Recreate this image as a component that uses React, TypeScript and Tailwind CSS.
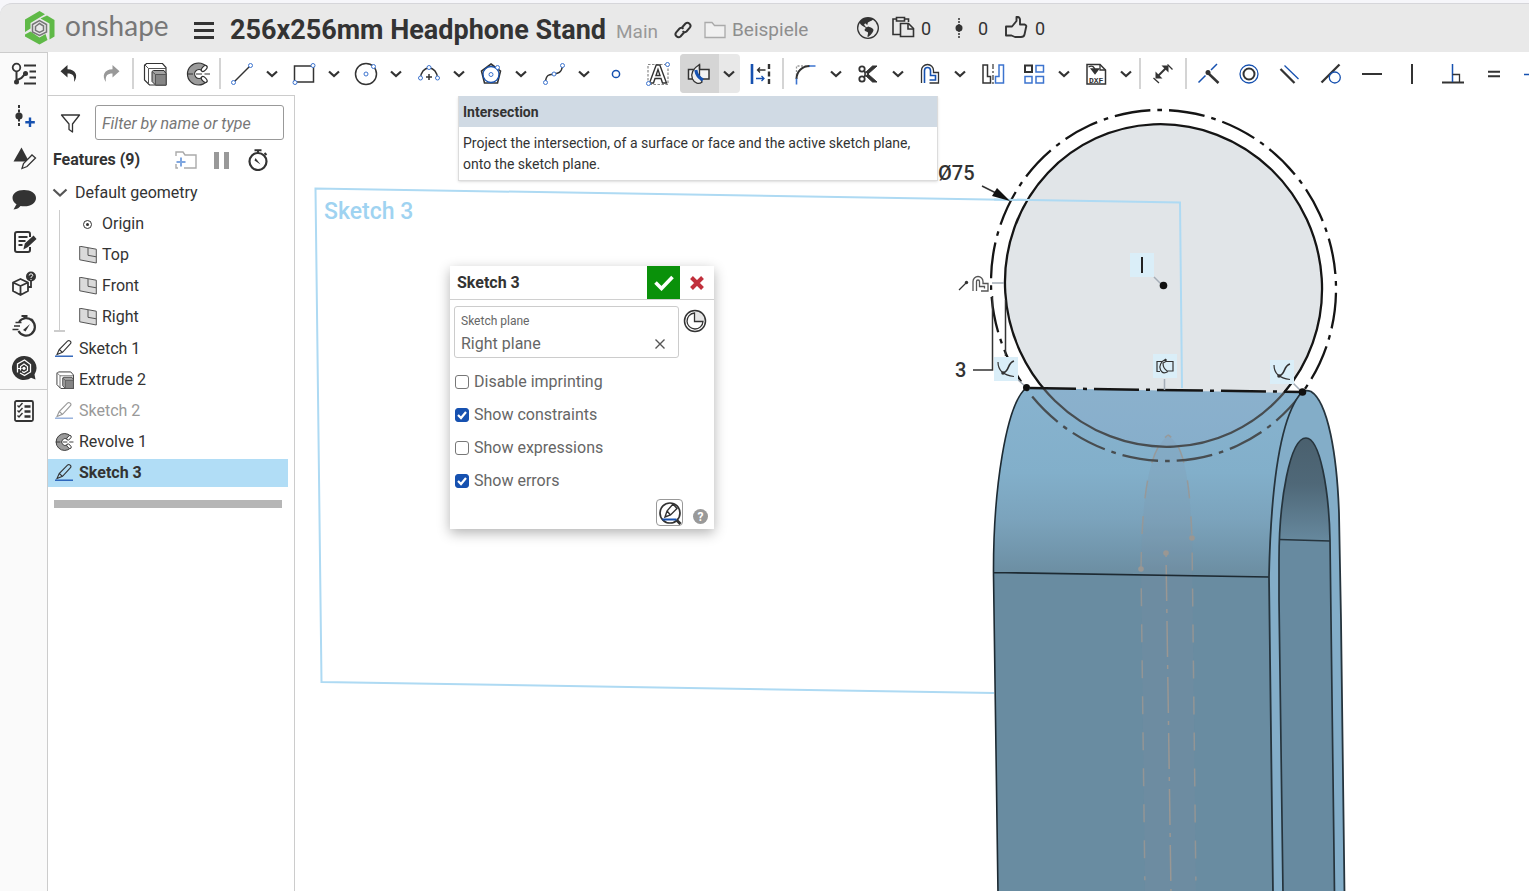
import React from "react";
import { BsGlobeAmericas } from "react-icons/bs";

const INK = "#333333";
const BLUE = "#1651b0";

type IconProps = { children: React.ReactNode; className?: string; box?: number };

function Icon({ children, className = "size-[26px]", box = 26 }: IconProps) {
  return (
    <svg
      viewBox={`0 0 ${box} ${box}`}
      className={`shrink-0 ${className}`}
      fill="none"
      stroke={INK}
      strokeWidth="1.5"
      aria-hidden="true"
    >
      {children}
    </svg>
  );
}

function Handle({ x, y, r = 2 }: { x: number; y: number; r?: number }) {
  return <circle cx={x} cy={y} r={r} fill="#fff" stroke="#3d74cf" strokeWidth="1" />;
}

/* ---------- shared feature icons ---------- */

function ExtrudeIcon({ className }: { className?: string }) {
  return (
    <Icon className={className}>
      <path d="M2.500 4.500 4.500 2.500H20.500L24 6.500V24H7.500L2.500 19z" fill="#fff" strokeWidth="1.200" />
      <path d="M2.500 3.500 6.500 7.500V23.500M6.500 7.500H24" stroke="#555" strokeWidth="1" />
      <path d="M10 10.500 11.500 9.500H22L24 12.500V24H13.500L10 20.500z" fill="#a2a2a2" strokeWidth="1" />
      <path d="M13.500 13.500H24V24H13.500z" fill="#858585" stroke="#555" strokeWidth="1" />
      <path d="M10 10.500 13.500 13.500" stroke="#555" strokeWidth="1" />
    </Icon>
  );
}

function RevolveIcon({ className }: { className?: string }) {
  return (
    <Icon className={className}>
      <path
        d="M20.500 5.500A11 11 0 1 0 20.500 20.500L16 16.500A4.500 4.500 0 1 1 16 9.500Z"
        fill="#9b9b9b"
        strokeWidth="1.200"
      />
      <ellipse cx="18.200" cy="7.500" rx="2" ry="3.600" transform="rotate(45 18.200 7.500)" fill="#fff" strokeWidth="1.200" />
      <ellipse cx="18.200" cy="18.500" rx="2" ry="3.600" transform="rotate(-45 18.200 18.500)" fill="#fff" strokeWidth="1.200" />
      <path d="M1 13h6M10 13h6M18.500 13h5.500" strokeWidth="1.200" />
    </Icon>
  );
}

function PencilIcon({ className }: { className?: string }) {
  return (
    <Icon className={className} box={18}>
      <path d="M2 14.500 4.200 9.500 12.700.9q1.200-.8 2.500.3t.3 2.500L7.500 12.300zM4.200 9.500l3.300 2.800M2 14.500l5.500-2.200" strokeWidth="1.100" />
      <path d="M0 16.200h18" stroke={BLUE} strokeWidth="1.300" />
    </Icon>
  );
}

function PlaneIcon() {
  return (
    <Icon className="size-[18px]" box={18}>
      <path d="M.7.200 17.300 3.200v13.800L.7 13.800z" fill="#dadada" stroke="#555" strokeWidth="1" />
      <path d="M9 2v7.300l8.300 1.500" stroke="#555" strokeWidth="1" />
    </Icon>
  );
}

function OffsetShape({ inner = BLUE }: { inner?: string }) {
  return (
    <>
      <path d="M4.500 22V9.500a6 6 0 0 1 12 0v2h5v10.500h-9" strokeWidth="1.300" />
      <path d="M7.500 22V9.500a3 3 0 0 1 6 0v5h5v4.500h-6" stroke={inner} strokeWidth="1.600" />
    </>
  );
}

/* ---------- toolbar ---------- */

function Chevron() {
  return (
    <svg viewBox="0 0 12 8" className="h-2 w-3" fill="none" stroke={INK} strokeWidth="2.200" aria-hidden="true">
      <path d="M1 1.500 6 6l5-4.500" />
    </svg>
  );
}

type Tool = { name: string; icon: React.ReactNode; menu?: boolean; active?: boolean };

function ToolButton({ tool }: { tool: Tool }) {
  return (
    <div className={`flex h-[39px] shrink-0 overflow-hidden rounded ${tool.active ? "bg-[#e8e8e8]" : ""}`}>
      <button
        aria-label={tool.name}
        className={`grid w-[39px] place-items-center ${tool.active ? "bg-[#d5d5d5]" : ""}`}
      >
        {tool.icon}
      </button>
      {tool.menu && (
        <button aria-label={`${tool.name} options`} className="grid w-[21px] place-items-center">
          <Chevron />
        </button>
      )}
    </div>
  );
}

function ToolGroup({ tools, className }: { tools: Tool[]; className: string }) {
  return (
    <div className={`flex shrink-0 items-center justify-between ${className}`}>
      {tools.map((tool) => (
        <ToolButton key={tool.name} tool={tool} />
      ))}
    </div>
  );
}

function Divider() {
  return <div className="h-[31px] w-[2px] shrink-0 bg-[#d4d4d4]" />;
}

const historyTools: Tool[] = [
  {
    name: "Undo",
    icon: (
      <Icon>
        <path d="M11.500 4 4.500 10.300l7 6.300v-4.200c5 0 7.500 2 6.500 8.600C22.500 15 20 8.200 11.500 8.200z" fill={INK} stroke="none" />
      </Icon>
    ),
  },
  {
    name: "Redo",
    icon: (
      <Icon>
        <path d="M14.500 4 21.500 10.300l-7 6.300v-4.200c-5 0-7.500 2-6.500 8.600C3.500 15 6 8.200 14.500 8.200z" fill="#999" stroke="none" />
      </Icon>
    ),
  },
];

const solidTools: Tool[] = [
  { name: "Extrude", icon: <ExtrudeIcon className="size-[26px]" /> },
  { name: "Revolve", icon: <RevolveIcon className="size-[26px]" /> },
];

const sketchTools: Tool[] = [
  {
    name: "Line",
    menu: true,
    icon: (
      <Icon>
        <path d="M4.500 21.500 21.500 4.500" />
        <Handle x={4.500} y={21.500} />
        <Handle x={21.500} y={4.500} />
      </Icon>
    ),
  },
  {
    name: "Rectangle",
    menu: true,
    icon: (
      <Icon>
        <path d="M3.500 5h19v16h-19z" />
        <Handle x={22} y={4.500} />
        <Handle x={4} y={21.500} />
      </Icon>
    ),
  },
  {
    name: "Circle",
    menu: true,
    icon: (
      <Icon>
        <circle cx="13" cy="13" r="10.500" />
        <circle cx="13" cy="13" r="2" stroke="#3d74cf" strokeWidth="1" />
        <Handle x={20.500} y={5.500} />
      </Icon>
    ),
  },
  {
    name: "Arc",
    menu: true,
    icon: (
      <Icon>
        <path d="M4.500 17.500a8.500 10.500 0 0 1 17 0" />
        <path d="M13 13v6M10 16h6" strokeWidth="1.500" />
        <Handle x={4.500} y={17} />
        <Handle x={21.500} y={17} />
        <Handle x={13} y={6.500} />
      </Icon>
    ),
  },
  {
    name: "Polygon",
    menu: true,
    icon: (
      <Icon>
        <path d="M13 3 22.500 10 19.500 22H6.500L3.500 10z" strokeWidth="1.600" />
        <circle cx="13" cy="13.500" r="8" stroke={BLUE} strokeWidth="1.300" />
        <circle cx="13" cy="13.500" r="2" stroke="#3d74cf" strokeWidth="1" />
        <Handle x={19.500} y={6.500} />
      </Icon>
    ),
  },
  {
    name: "Spline",
    menu: true,
    icon: (
      <Icon>
        <path d="M4.500 21C5 13 9 13.500 13 13s7.500-1 8.500-8" />
        <Handle x={4.500} y={21.500} />
        <Handle x={13} y={13} />
        <Handle x={21.500} y={4.500} />
      </Icon>
    ),
  },
  {
    name: "Point",
    icon: (
      <Icon>
        <circle cx="13" cy="13" r="3.600" stroke={BLUE} />
      </Icon>
    ),
  },
  {
    name: "Text",
    icon: (
      <Icon>
        <path d="M3 3.500h20v20H3z" stroke="#888" strokeDasharray="2.500 1.500" strokeWidth="1.200" />
        <path d="M11.200 4h3.600L21.500 22h-4l-1.500-4.500h-6L8.500 22h-4zM13 8.500 11 14.500h4z" fill="#fff" strokeWidth="1.400" />
        <Handle x={22.500} y={3.500} />
        <Handle x={3.500} y={22.500} />
      </Icon>
    ),
  },
  {
    name: "Intersection",
    menu: true,
    active: true,
    icon: (
      <Icon>
        <path d="M2.500 8.500h20.500v9.500H2.500z" fill="#f2f2f2" />
        <path d="M13.500 3.500C7 7.500 4.500 13 6.500 18c2 4.500 6.500 5.500 9.500 3l-2.500-6z" fill="#eee" strokeWidth="1.300" />
        <path d="M13.500 3.500v5" />
        <path d="M9.800 9c.7 4.500 3.200 8 7.200 10" stroke={BLUE} strokeWidth="3.200" />
      </Icon>
    ),
  },
  {
    name: "Construction",
    icon: (
      <Icon>
        <path d="M4 3v20" stroke={BLUE} strokeWidth="2.600" />
        <path d="M21 3v20" strokeWidth="2.400" strokeDasharray="5 2.500" />
        <path d="M17.500 9h-8M12 6.500 9.500 9l2.500 2.500" strokeWidth="1.300" />
        <path d="M8 17.500h8M13.500 15l2.500 2.500-2.500 2.500" stroke={BLUE} strokeWidth="1.300" />
      </Icon>
    ),
  },
];

const editTools: Tool[] = [
  {
    name: "Fillet",
    menu: true,
    icon: (
      <Icon>
        <path d="M3.500 18V5h13" stroke="#999" strokeDasharray="2 1.500" strokeWidth="1.300" />
        <path d="M3.500 18C3.500 10.500 9 5 17 5" strokeWidth="2" />
        <path d="M3.500 17.500v6M16 5h6.500" stroke="#3d74cf" strokeWidth="1.600" />
      </Icon>
    ),
  },
  {
    name: "Trim",
    menu: true,
    icon: (
      <Icon>
        <circle cx="7" cy="8" r="2.700" strokeWidth="1.800" />
        <circle cx="7" cy="18" r="2.700" strokeWidth="1.800" />
        <path d="M9 9.500 22 21h-4.500L10.500 14.500zM9 16.500 22 5h-4.500L10.500 11.500z" fill={INK} strokeWidth="1" />
      </Icon>
    ),
  },
  {
    name: "Offset",
    menu: true,
    icon: (
      <Icon>
        <OffsetShape />
      </Icon>
    ),
  },
  {
    name: "Mirror",
    icon: (
      <Icon>
        <path d="M3 4h4.500v11.500h3v6.500H3z" />
        <path d="M13 3v20" strokeDasharray="5 2 2 2" strokeWidth="1.200" />
        <path d="M23.500 4H19v11.500h-3.500v6.500h8z" stroke="#3d74cf" />
      </Icon>
    ),
  },
  {
    name: "Pattern",
    menu: true,
    icon: (
      <Icon>
        <path d="M4 4.500h7v6.500H4z" strokeWidth="2" />
        <path d="M15 4.500h7.500v6.500H15zM4 15.500h7v6.500H4zM15 15.500h7.500v6.500H15z" stroke="#3d74cf" />
      </Icon>
    ),
  },
  {
    name: "Insert DXF",
    menu: true,
    icon: (
      <Icon>
        <path d="M4 3.500h13L22.500 9v14H4z" strokeWidth="1.500" />
        <path d="M17 3.500V9h5.500M5.500 6c3.500-2 6.500-.5 6.500 4" strokeWidth="1.300" />
        <path d="M8.500 8h7L12 12.500z" fill={INK} />
        <text x="13.200" y="21.500" fontSize="8" fontWeight="700" textAnchor="middle" fill={INK} stroke="none" fontFamily="Liberation Mono, monospace">DXF</text>
      </Icon>
    ),
  },
];

const dimensionTools: Tool[] = [
  {
    name: "Dimension",
    icon: (
      <Icon>
        <path d="M7.500 15.500 16 7" strokeWidth="2" />
        <path d="M5.500 10.500v7H12.500zM11.500 4.500H18.500V11.500z" fill={INK} stroke="none" />
        <path d="M17.500 3.500 22.500 8.500M3.500 17 9 22" strokeWidth="1.300" />
      </Icon>
    ),
  },
];

const constraintTools: Tool[] = [
  {
    name: "Coincident",
    icon: (
      <Icon>
        <path d="M2.500 21.500 9.500 14.500M15 9 21 3" stroke={BLUE} />
        <path d="m12 12 10.500 10" strokeWidth="2.500" />
        <circle cx="12" cy="11.500" r="2.500" fill={INK} stroke="none" />
      </Icon>
    ),
  },
  {
    name: "Concentric",
    icon: (
      <Icon>
        <circle cx="13" cy="13" r="9" stroke={BLUE} strokeWidth="1.300" />
        <circle cx="13" cy="13" r="5.500" strokeWidth="2" />
      </Icon>
    ),
  },
  {
    name: "Parallel",
    icon: (
      <Icon>
        <path d="M3.500 8 17.500 22" strokeWidth="2.300" />
        <path d="M7.500 4.500 21.500 18" stroke={BLUE} strokeWidth="1.300" />
      </Icon>
    ),
  },
  {
    name: "Tangent",
    icon: (
      <Icon>
        <path d="M3.500 21.500 21.500 3.500" strokeWidth="2.300" />
        <circle cx="16.800" cy="16.500" r="5.500" stroke={BLUE} strokeWidth="1.300" />
      </Icon>
    ),
  },
  { name: "Horizontal", icon: <Icon><path d="M3 13h20" strokeWidth="2" /></Icon> },
  { name: "Vertical", icon: <Icon><path d="M13 3v20" strokeWidth="2" /></Icon> },
  {
    name: "Perpendicular",
    icon: (
      <Icon>
        <path d="M2 21.500h22" strokeWidth="2" />
        <path d="M12.500 3v18" stroke={BLUE} />
        <path d="M12.500 13.500h7v7.500" strokeWidth="1.300" />
      </Icon>
    ),
  },
  { name: "Equal", icon: <Icon><path d="M7 10.800h12M7 15.200h12" strokeWidth="2" /></Icon> },
  {
    name: "Midpoint",
    icon: (
      <Icon>
        <path d="M2 13.500h8M16 13.500h8" stroke={BLUE} />
        <circle cx="13" cy="13" r="2.500" fill={INK} stroke="none" />
      </Icon>
    ),
  },
];

function Toolbar() {
  return (
    <div className="flex h-[43px] items-center overflow-hidden bg-white" role="toolbar" aria-label="Sketch tools">
      <ToolGroup tools={historyTools} className="ml-px mr-[2px] w-[81px]" />
      <Divider />
      <ToolGroup tools={solidTools} className="mx-px w-[83px]" />
      <Divider />
      <ToolGroup tools={sketchTools} className="mx-px w-[559px]" />
      <Divider />
      <ToolGroup tools={editTools} className="mx-[2px] w-[351px]" />
      <Divider />
      <ToolGroup tools={dimensionTools} className="mx-[2px] w-[40px]" />
      <Divider />
      <ToolGroup tools={constraintTools} className="ml-[2px] w-[365px]" />
    </div>
  );
}

/* ---------- header ---------- */

function Logo() {
  return (
    <svg viewBox="0 0 30 34" className="h-[34px] w-[30px] shrink-0" aria-hidden="true">
      <path d="M0 8.500 14.500 0 20 3.300 5.500 12V17.500L0 21z" fill="#5fb947" />
      <path d="M22 4.500 29.500 9V25.500L24.500 28.500V12.500L15.500 7.500z" fill="#5fb947" />
      <path d="M0 23.500 5.500 20.500 14.500 26.500 20.500 23 22.500 29 14.500 33.500 0 25.500z" fill="#5fb947" />
      <path d="M7.500 13.500 14.500 9.500l7 4v7.500L14.500 24.500l-7-3.500z" fill="none" stroke="#777" strokeWidth="1.500" />
      <path d="M10.500 15.500 14.500 12.500l4 2.500v4.300L14.500 21.500l-4-2.200z" fill="none" stroke="#777" strokeWidth="1.500" />
    </svg>
  );
}

function Header() {
  return (
    <div className="bg-[#f6f6fa] pt-[3px]">
      <header className="flex h-[49px] items-center rounded-tl-xl border-t border-[#d6d6da] bg-[#e9e9e9] pl-[25px] text-[#333]">
        <a href="#home" className="flex w-[169px] shrink-0 items-center gap-2.5" aria-label="Onshape home">
          <Logo />
          <span className="pb-1.5 font-['Lato'] text-[28px] leading-8 text-[#777]">onshape</span>
        </a>
        <button aria-label="Menu" className="flex w-5 shrink-0 flex-col gap-[4px] pt-1">
          <span className="h-[3px] bg-[#333]" />
          <span className="h-[3px] bg-[#333]" />
          <span className="h-[3px] bg-[#333]" />
        </button>
        <h1 className="ml-4 w-[377px] shrink-0 whitespace-nowrap pt-1 text-[27px] font-bold leading-8">256x256mm Headphone Stand</h1>
        <span className="ml-[9px] w-[42px] shrink-0 pt-2 text-[19px] leading-6 text-[#999]">Main</span>
        <button aria-label="Copy link" className="ml-4 shrink-0 pt-1">
          <Icon className="size-[18px]" box={18}>
            <path d="M8 6.500 11.500 2.500q2-1.700 4 .2t.3 4L12.500 10.500q-2 1.500-4-.3M10 11.500 6.500 15.500q-2 1.700-4-.2t-.3-4L5.500 7.500q2-1.500 4 .3" strokeWidth="2" />
          </Icon>
        </button>
        <a href="#beispiele" className="ml-3 flex w-[106px] shrink-0 items-center gap-1.5 pt-1 text-[19px] leading-6 text-[#8e8e8e]">
          <svg viewBox="0 0 22 18" className="h-[18px] w-[22px] shrink-0" fill="#f1f1f1" stroke="#aaa" strokeWidth="1.300" aria-hidden="true">
            <path d="M1 16.500V1.500h7l2.500 3H21v12z" />
          </svg>
          Beispiele
        </a>
        <BsGlobeAmericas className="ml-[47px] size-[22px] shrink-0" />
        <div className="ml-3 flex w-10 shrink-0 items-center justify-between">
          <Icon className="size-6" box={24}>
            <path d="M5 3H2v15.500h7M14 3h3.500v3M5.500 1.500h8v3.500h-8z" strokeWidth="1.600" />
            <path d="M9.500 7.500h8l5 5v8H9.500z" strokeWidth="1.600" fill="#e9e9e9" />
            <path d="M17 7.500v5.500H22.500" strokeWidth="1.600" />
          </Icon>
          <span className="pt-0.5 text-lg leading-6">0</span>
        </div>
        <div className="ml-5 flex w-[37px] shrink-0 items-center justify-between">
          <Icon className="h-6 w-4" box={16}>
            <path d="M8-2v20" strokeWidth="1.500" strokeDasharray="2 1" />
            <circle cx="8" cy="8" r="3.500" fill={INK} stroke="none" />
          </Icon>
          <span className="pt-0.5 text-lg leading-6">0</span>
        </div>
        <button aria-label="Like" className="ml-4 flex w-[41px] shrink-0 items-center justify-between">
          <Icon className="size-6" box={24}>
            <path d="M2 10.500h6L12.500 5V1q3-.5 3.500 2.500v5h4.500q2.500.7 1.500 3l-1.500 7q-.5 2.500-3.500 2.500h-6l-3.500-1.500H2z" strokeWidth="1.900" strokeLinejoin="round" />
          </Icon>
          <span className="pt-0.5 text-lg leading-6">0</span>
        </button>
      </header>
    </div>
  );
}

/* ---------- left rail ---------- */

const railItems: { name: string; icon: React.ReactNode }[] = [
  {
    name: "Feature list",
    icon: (
      <>
        <circle cx="5.500" cy="6.500" r="3.800" strokeWidth="1.800" />
        <path d="M5.500 10v11M5.500 19.500l5-2.500 3.500-4" strokeWidth="2" />
        <circle cx="5.500" cy="21" r="2.500" fill={INK} stroke="none" />
        <circle cx="14.500" cy="12.500" r="2.500" fill={INK} stroke="none" />
        <path d="M13 4.500h12M18.500 10.500h6.500M18.500 16.500h6.500M13 22.500h12" strokeWidth="2" />
      </>
    ),
  },
  {
    name: "Versions",
    icon: (
      <>
        <path d="M8 2v22" strokeDasharray="3 1.500" strokeWidth="2" />
        <circle cx="8" cy="13" r="3.600" fill={INK} stroke="none" />
        <path d="M19 14.500v9.500M14.300 19.300h9.500" stroke={BLUE} strokeWidth="2.400" />
      </>
    ),
  },
  {
    name: "Appearance",
    icon: (
      <>
        <path d="M10.500 2.500 18 16.500H2.500z" fill={INK} stroke="none" />
        <path d="M11 23.500l1.500-5L21 10l3.500 3L16 21.500z" fill="#fafafa" strokeWidth="1.300" />
      </>
    ),
  },
  {
    name: "Comments",
    icon: <path d="M13 3C6 3 1.500 6.500 1.500 11c0 3 2 5 4 6.200L2.500 22.500c4-.5 6-2 7-3.500 9 1.500 15.500-2.500 15.500-8C25 6.500 20 3 13 3z" fill={INK} stroke="none" />,
  },
  {
    name: "Notes",
    icon: (
      <>
        <path d="M19 8V5q0-2-2-2H6Q4 3 4 5v16q0 2 2 2h11q2 0 2-2v-3" strokeWidth="2" />
        <path d="M7.500 8h9M7.500 12h7M7.500 16h4" strokeWidth="1.800" />
        <path d="m13.500 19 1-4 8-7.500 2 2.500-8 7.500z" fill={INK} />
      </>
    ),
  },
  {
    name: "Part properties",
    icon: (
      <>
        <path d="M9.500 8 17 11.500v8.500L9.500 24 2 20v-8.500zM2 11.500 9.500 15l7.500-3.500M9.500 15v9" strokeWidth="1.800" strokeLinejoin="round" />
        <circle cx="20" cy="5.500" r="5" fill={INK} stroke="none" />
        <path d="M20 10v6h-3" strokeWidth="1.800" />
        <path d="M18.200 4.500q.2-1.700 1.800-1.700t1.800 1.500q0 1-1.800 2V7M20 8v1" stroke="#fff" strokeWidth="1" />
      </>
    ),
  },
  {
    name: "Performance",
    icon: (
      <>
        <path d="M8 9A8.700 8.700 0 1 1 7.500 18M10.500 3h6M13.500 3v3M20 6l2 2" strokeWidth="2.200" />
        <path d="M4.500 9.500h6M3 13h6M1.500 16.500h6" strokeWidth="1.400" />
        <path d="M12 17 19 11l-4.500 7.500z" fill={INK} stroke="none" />
      </>
    ),
  },
  {
    name: "Learning",
    icon: (
      <>
        <path d="M13 1a12 12 0 1 0 7 21.700l4.500 1.800-1-5A12 12 0 0 0 13 1z" fill={INK} stroke="none" />
        <path d="M6.500 17.500V9L13.500 5l6 4.500V17L13.500 20.500 9 18" stroke="#fff" strokeWidth="1.300" />
        <path d="M9.500 15.500V11.500L13 9l3.500 2.500v4L13 17.500l-2-1" stroke="#fff" strokeWidth="1.200" />
        <circle cx="13" cy="13.300" r="1.600" fill="#fff" stroke="none" />
        <path d="M6.500 13.500h4" stroke="#fff" strokeWidth="1.100" />
      </>
    ),
  },
];

function Rail() {
  return (
    <nav aria-label="Tools" className="flex w-12 shrink-0 flex-col border-r border-t border-[#ccc] bg-[#fafafa]">
      {railItems.map((item) => (
        <button key={item.name} aria-label={item.name} className="grid h-[42px] place-items-center">
          <Icon>{item.icon}</Icon>
        </button>
      ))}
      <div className="border-t border-[#ccc]">
        <button aria-label="Tasks" className="grid h-[42px] w-full place-items-center">
          <Icon>
            <rect x="4" y="3" width="18" height="20" rx="1.500" strokeWidth="1.800" />
            <path d="M13.500 8.500h6M13.500 13.500h6M13.500 18.500h6" strokeWidth="2.300" />
            <path d="m6.500 7.500 1.500 1.500 3.500-4M6.500 12.500 8 14l3.500-4M6.500 17.500 8 19l3.500-4" strokeWidth="1.400" />
          </Icon>
        </button>
      </div>
    </nav>
  );
}

/* ---------- feature list ---------- */

function FeatureRow({ icon, label, tone = "text-[#333]" }: { icon: React.ReactNode; label: string; tone?: string }) {
  return (
    <li className={`mr-1.5 flex h-7 items-center pl-[7px] text-base ${tone}`}>
      <span className="grid w-6 shrink-0 justify-items-start">{icon}</span>
      <span>{label}</span>
    </li>
  );
}

function FeaturePanel() {
  return (
    <aside className="flex w-[247px] shrink-0 flex-col border-r border-t border-[#ccc] bg-white text-[#333]">
      <div className="flex items-center gap-3.5 pl-3 pr-2.5 pt-[9px]">
        <Icon className="size-[21px]" box={21}>
          <path d="M1.500 3h18L12.500 12v8L9 17.500V12z" strokeLinejoin="round" strokeWidth="1.300" />
        </Icon>
        <input
          aria-label="Filter by name or type"
          placeholder="Filter by name or type"
          className="h-[35px] min-w-0 flex-1 rounded-[3px] border border-[#999] px-1.5 pt-0.5 text-base italic placeholder:text-[#777]"
        />
      </div>
      <div className="mt-1.5 flex h-7 items-center pl-[5px]">
        <h2 className="w-[122px] text-base font-bold">Features (9)</h2>
        <button aria-label="New folder">
          <svg viewBox="0 0 22 18" className="h-[18px] w-[22px]" fill="none" stroke="#aaa" strokeWidth="1.400" aria-hidden="true">
            <path d="M1 5V1h7l2 3h11v13H9M1 13v4h2" />
            <path d="M6 6.500v9M1.500 11h9" stroke="#7ea6e0" strokeWidth="2" />
          </svg>
        </button>
        <button aria-label="Pause" className="ml-[17px] flex gap-[5px]">
          <span className="h-[17px] w-[5px] bg-[#999]" />
          <span className="h-[17px] w-[5px] bg-[#999]" />
        </button>
        <button aria-label="Regeneration times" className="ml-[18px]">
          <Icon className="size-[22px]" box={22}>
            <circle cx="11" cy="12.500" r="8.500" strokeWidth="2.200" />
            <path d="M7.500 1.300h7M11 1v3M17.500 4l2 2" strokeWidth="2" />
            <path d="m8.500 9 5 6.500-6-4z" fill={INK} stroke="none" />
          </Icon>
        </button>
      </div>
      <ul className="mt-[5px] flex flex-col gap-[3px] text-base">
        <li>
          <div className="flex h-7 items-center gap-[7px] pl-1">
            <svg viewBox="0 0 16 10" className="h-2.5 w-4" fill="none" stroke="#555" strokeWidth="2.200" aria-hidden="true">
              <path d="m1.500 1.500 6.500 6 6.500-6" />
            </svg>
            Default geometry
          </div>
          <ul className="ml-[11px] mt-[3px] flex flex-col gap-[3px] border-l border-[#ccc] pb-px">
            <li className="flex h-7 items-center gap-[9px] pl-[22px]">
              <Icon className="size-[11px]" box={11}>
                <circle cx="5.500" cy="5.500" r="4" strokeWidth="1" />
                <circle cx="5.500" cy="5.500" r="1.500" fill={INK} stroke="none" />
              </Icon>
              Origin
            </li>
            {["Top", "Front", "Right"].map((name) => (
              <li key={name} className="flex h-7 items-center gap-[5px] pl-[19px]">
                <PlaneIcon />
                {name}
              </li>
            ))}
          </ul>
          <div className="-mt-0.5 ml-1.5 h-0.5 w-[11px] bg-[#ccc]" />
        </li>
        <FeatureRow icon={<PencilIcon className="size-[18px]" />} label="Sketch 1" />
        <FeatureRow icon={<ExtrudeIcon className="size-5" />} label="Extrude 2" />
        <FeatureRow icon={<PencilIcon className="size-[18px] opacity-50" />} label="Sketch 2" tone="text-[#999]" />
        <FeatureRow icon={<RevolveIcon className="size-5" />} label="Revolve 1" />
        <FeatureRow icon={<PencilIcon className="size-[18px]" />} label="Sketch 3" tone="bg-[#b1ddf6] font-bold" />
      </ul>
      <div className="ml-1.5 mr-3 mt-[13px] h-2 bg-[#b6b6b6]" />
    </aside>
  );
}

/* ---------- model view ---------- */

const BODY = "M1026 388C1006 405 993 490 993.500 575L998 893H1274L1269 577C1271 480 1281 415 1303 392z";
const RING = "M1302 392Q1306 389.500 1311 391.500C1328 402 1337 455 1339 513L1341 620L1344.500 893H1273L1269 577C1271 480 1281 415 1302 392z";
const HOLE = "M1279 600V560C1279 500 1290 438 1306 438C1320 438 1329 490 1330 540L1334.500 893H1283z";

function Circles({ stroke }: { stroke: string }) {
  return (
    <g fill="none" stroke={stroke} strokeWidth="2.300">
      <ellipse cx="1163.500" cy="285.500" rx="157.800" ry="162" transform="rotate(-24.700 1163.500 285.500)" />
      <ellipse
        cx="1163.500"
        cy="285.500"
        rx="171.700"
        ry="176.300"
        transform="rotate(-24.700 1163.500 285.500)"
        strokeDasharray="36 7 4.650 7"
        strokeDashoffset="28"
      />
    </g>
  );
}

function TangentBadge({ x, y }: { x: number; y: number }) {
  return (
    <g transform={`translate(${x} ${y})`} fill="none" stroke={INK}>
      <rect width="24" height="24" fill="#daeef8" stroke="none" />
      <path d="M4 5c0 6 3 13 16 14.500" strokeWidth="1.200" />
      <path d="M9 16c7-2 4-10 11-12" strokeWidth="1.700" />
      <circle cx="9" cy="16" r="1.800" fill={INK} stroke="none" />
    </g>
  );
}

function Model() {
  return (
    <svg className="absolute inset-0 size-full" aria-label="Model view" role="img">
      <defs>
        <linearGradient id="body" gradientUnits="userSpaceOnUse" x1="0" y1="388" x2="0" y2="576">
          <stop offset="0" stopColor="#88b3cf" />
          <stop offset="0.450" stopColor="#82afca" />
          <stop offset="0.700" stopColor="#7ba3bc" />
          <stop offset="1" stopColor="#6b8da1" />
        </linearGradient>
        <linearGradient id="hole" gradientUnits="userSpaceOnUse" x1="0" y1="438" x2="0" y2="540">
          <stop offset="0" stopColor="#4a606e" />
          <stop offset="0.450" stopColor="#4f6878" />
          <stop offset="1" stopColor="#66889d" />
        </linearGradient>
        <clipPath id="front"><path d={BODY} /></clipPath>
        <clipPath id="above"><path d="M900 90H1400V393H1303L1026 388H900z" /></clipPath>
      </defs>
      <g transform="translate(-295 -96)">
        <path d="M994 693 321.500 682 315.500 188.500 1180 202.500 1182 388" fill="none" stroke="#aedaf3" strokeWidth="2" />
        <text x="324" y="219" fontSize="23" fontWeight="500" fill="#9fd3f1">Sketch 3</text>

        <path d={BODY} fill="url(#body)" />
        <path d="M993.500 572.500 1269 577 1274 893H998z" fill="#698ca1" />
        <g clipPath="url(#front)">
          <ellipse cx="1163.500" cy="285.500" rx="157.800" ry="162" fill="#94a9c8" fillOpacity=".2" />
          <path d="M1168 436C1148 450 1142 500 1141 569L1145 893H1196L1192 538C1190 490 1186 445 1168 436z" fill="#8590a0" fillOpacity=".16" />
          <path d="M1168 435C1148 450 1142 500 1141 569L1145 893M1168 435C1186 445 1190 490 1192 538L1196 893" fill="none" stroke="#9a9793" strokeWidth="1.500" strokeDasharray="4 11 18 18 18 18 18 18 18 18 18 18 18 18 18 18 18 18 18 18 18 18 18 18 18 18" strokeOpacity=".85" />
          <path d="M1166 553 1171 893" stroke="#9a9793" strokeWidth="1.500" strokeDasharray="36 8 4 8" strokeDashoffset="-12" />
          <g fill="#9a9793">
            <circle cx="1166" cy="553" r="2.800" />
            <circle cx="1192" cy="538" r="2.800" />
            <circle cx="1141" cy="569" r="2.800" />
          </g>
          <Circles stroke="#484d50" />
        </g>
        <path d="M1026 388C1006 405 993 490 993.500 575L998 893M993.500 572.500 1269 577" fill="none" stroke="#1d2a32" strokeWidth="1.600" />
        <path d={RING} fill="#83adc8" stroke="#26343d" strokeWidth="1.800" />
        <path d={HOLE} fill="url(#hole)" />
        <path d="M1279 539.500 1330 541 1334.500 893H1283z" fill="#678aa0" />
        <path d={HOLE} fill="none" stroke="#26343d" strokeWidth="1.700" />
        <path d="M1279 539.500 1330 541" stroke="#26343d" strokeWidth="1.500" />

        <g clipPath="url(#above)">
          <ellipse cx="1163.500" cy="285.500" rx="157.800" ry="162" transform="rotate(-24.700 1163.500 285.500)" fill="#e1e5e8" />
          <Circles stroke="#151515" />
          <path d="M994 199.500 1180 202.500 1182 388" fill="none" stroke="#aedaf3" strokeWidth="2" />
        </g>
        <path d="M1026 388 1303 392" stroke="#151515" strokeWidth="2.500" strokeDasharray="46 7 4 7 45 7 4 7" strokeDashoffset="-4" />

        <g stroke="#333" strokeWidth="1.500" fill="none">
          <path d="M982 186 1000 195M992.500 296V370H973M1005.500 300V356" />
          <path d="m992 196 5-8 13 13z" fill="#111" stroke="none" />
          <path d="M959 290l7-7" strokeWidth="1.200" />
          <circle cx="966.500" cy="282.500" r="1.700" fill={INK} stroke="none" />
          <rect x="970" y="274" width="20" height="20" fill="#fff" stroke="none" />
          <path d="M973 291V281.500a5 5 0 0 1 10 0v2h5v7.500h-7M976.500 291v-9.500a1.500 1.500 0 0 1 3 0v5h5v2" stroke="#555" strokeWidth="1.300" />
          <path d="M992 283h12M1154 277l8 8M1164.500 379v11M1017 379l9 8M1292 382l9 9" stroke="#a4adb7" />
        </g>
        <g fontSize="20" fontWeight="500" fill="#333">
          <text x="938" y="180">Ø75</text>
          <text x="955" y="377">3</text>
        </g>
        <g fill="#111">
          <circle cx="1163.500" cy="285.500" r="3.800" />
          <circle cx="1026.500" cy="387.500" r="3.500" />
          <circle cx="1302.500" cy="392" r="3.800" />
        </g>
        <rect x="1130" y="253" width="24" height="24" fill="#daeef8" />
        <path d="M1142 257v16" stroke="#222" strokeWidth="2" />
        <g transform="translate(1153 354)" fill="none" stroke={INK} strokeWidth="1.200">
          <rect width="24" height="24" fill="#daeef8" stroke="none" />
          <path d="M7 17.500H4v-10h5M13 7.500h7v9.500h-5M13 5C8 7.500 5.500 12 7.500 16s5 3 7.500 1.500M13 5v2.500l-3 1.500c0 4 2 7 5 8.500" />
        </g>
        <TangentBadge x={994} y={357} />
        <TangentBadge x={1270} y={360} />
      </g>
    </svg>
  );
}

function ToolTip() {
  return (
    <div role="tooltip" className="absolute left-[163px] top-0 w-[480px] border-x border-b border-[#dcdcdc] bg-white text-[#333] shadow-sm">
      <div className="bg-[#d0dae4] px-1 pb-1 pt-1.5 text-sm font-bold leading-[21px]">Intersection</div>
      <p className="px-1 pb-[5px] pt-[6px] text-sm leading-[21px]">
        Project the intersection, of a surface or face and the active sketch plane, onto the sketch plane.
      </p>
    </div>
  );
}

function Option({ label, checked = false }: { label: string; checked?: boolean }) {
  return (
    <label className="flex h-[33px] items-center gap-[5px]">
      <span className="grid size-3.5 place-items-center">
        <input
          type="checkbox"
          defaultChecked={checked}
          className="peer col-start-1 row-start-1 size-3.5 appearance-none rounded-[3px] border border-[#777] bg-white checked:border-[#1651b0] checked:bg-[#1651b0]"
        />
        <svg viewBox="0 0 14 14" className="pointer-events-none invisible col-start-1 row-start-1 size-3.5 peer-checked:visible" fill="none" stroke="#fff" strokeWidth="2.200" aria-hidden="true">
          <path d="m3 7 3 3 5-6" />
        </svg>
      </span>
      {label}
    </label>
  );
}

function SketchDialog() {
  return (
    <section aria-label="Sketch 3" className="absolute left-[155px] top-[170px] w-[264px] bg-white text-base text-[#666] shadow-[0_4px_12px_rgba(0,0,0,0.3)]">
      <div className="flex h-[34px] border-b border-[#d0d0d0]">
        <h2 className="flex-1 pl-[7px] text-base font-bold leading-[34px] text-[#333]">Sketch 3</h2>
        <button aria-label="Accept" className="grid w-[33px] place-items-center bg-[#0a910a]">
          <svg viewBox="0 0 20 16" className="h-4 w-5" fill="none" stroke="#fff" strokeWidth="3.600" aria-hidden="true">
            <path d="m1.500 7.500 6 6L18.500 2" />
          </svg>
        </button>
        <button aria-label="Cancel" className="grid w-[34px] place-items-center">
          <svg viewBox="0 0 14 14" className="size-3.5" fill="none" stroke="#c1303c" strokeWidth="4" aria-hidden="true">
            <path d="m1.500 1.500 11 11M12.500 1.500l-11 11" />
          </svg>
        </button>
      </div>
      <div className="flex items-start gap-1 pl-1 pr-[7px] pt-1.5">
        <div className="h-[52px] flex-1 rounded-[3px] border border-[#ccc] pl-1.5 pt-1">
          <div className="text-xs leading-[21px]">Sketch plane</div>
          <div className="flex items-center justify-between pr-3 leading-6">
            Right plane
            <button aria-label="Clear sketch plane">
              <svg viewBox="0 0 12 12" className="size-3" fill="none" stroke="#555" strokeWidth="1.400" aria-hidden="true">
                <path d="m1.500 1.500 9 9M10.500 1.500l-9 9" />
              </svg>
            </button>
          </div>
        </div>
        <button aria-label="Final" className="pt-[3px]">
          <Icon className="size-6" box={24}>
            <path d="M12 1.500A10.500 10.500 0 0 1 22.500 12H12z" fill="#e6e6e6" stroke="none" />
            <circle cx="12" cy="12" r="10.500" />
            <path d="M11.500 4A8 8 0 1 0 20 12.500H11.500z" strokeWidth="1.300" fill="#fff" />
          </Icon>
        </button>
      </div>
      <div className="pl-[5px] pt-[7px]">
        <Option label="Disable imprinting" />
        <Option label="Show constraints" checked />
        <Option label="Show expressions" />
        <Option label="Show errors" checked />
      </div>
      <div className="flex items-center justify-end gap-2.5 pb-[3px] pr-1.5 pt-0.5">
        <button aria-label="Zoom to sketch" className="grid size-[27px] place-items-center rounded border border-[#999]">
          <Icon className="size-6" box={24}>
            <circle cx="12" cy="12" r="10" strokeWidth="1.700" />
            <path d="m18.500 19 4 4" strokeWidth="3" />
            <path d="m7 16 2-6 6-7 4 4.500-6.500 6.500zM9 10l3.500 4" strokeWidth="1.400" />
            <path d="M4.500 18.500h14" stroke={BLUE} strokeWidth="2" />
          </Icon>
        </button>
        <button aria-label="Help" className="mt-2 grid size-[15px] place-items-center rounded-full bg-[#999] text-xs font-bold leading-none text-white">?</button>
      </div>
    </section>
  );
}

export default function App() {
  return (
    <div className="flex min-h-screen flex-col overflow-hidden bg-white font-['Roboto','Liberation_Sans',sans-serif]">
      <Header />
      <div className="flex flex-1">
        <Rail />
        <div className="flex min-w-0 flex-1 flex-col">
          <Toolbar />
          <div className="flex flex-1">
            <FeaturePanel />
            <main className="relative mt-px flex-1 overflow-hidden">
              <Model />
              <ToolTip />
              <SketchDialog />
            </main>
          </div>
        </div>
      </div>
    </div>
  );
}
